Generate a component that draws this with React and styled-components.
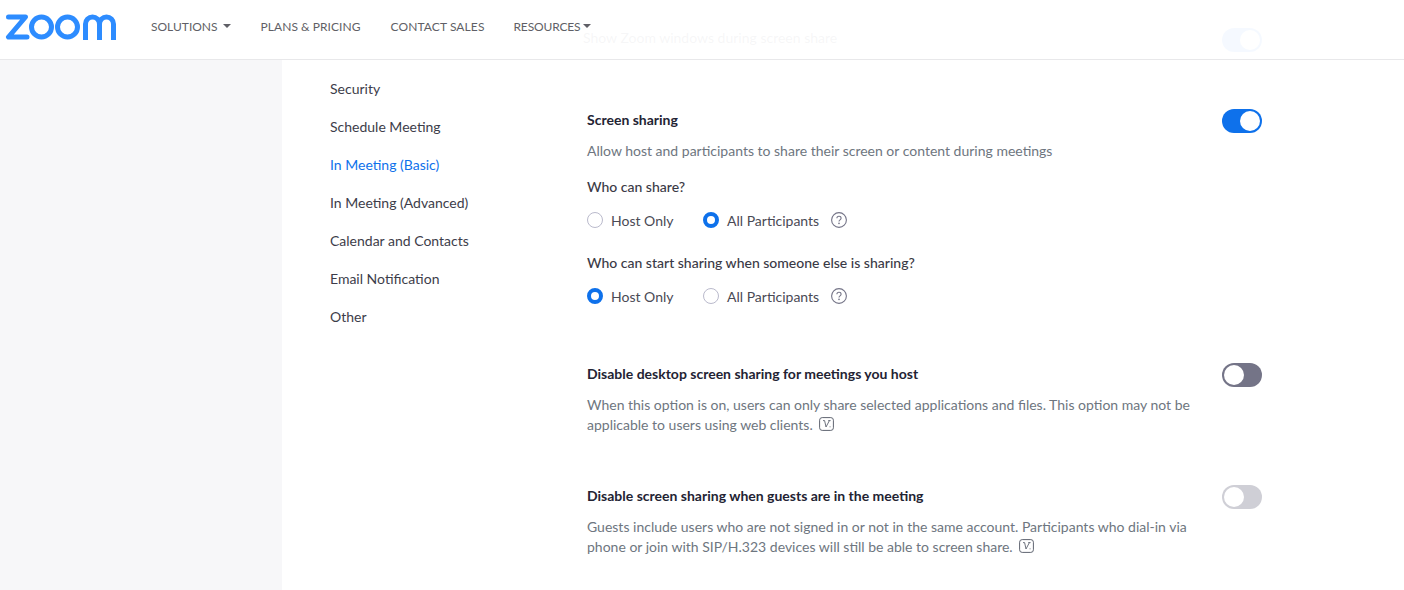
import React from 'react';
import styled, { createGlobalStyle } from 'styled-components';

const Global = createGlobalStyle`
    html, body { margin: 0; padding: 0; height: 100%; overflow: hidden; background: #fff; }
    body { font-family: Lato, "Open Sans", sans-serif; color: #232333; }
`;

const Page = styled.div`
    position: relative;
    display: flex;
    width: 1404px;
    height: 590px;
    overflow: hidden;
`;
const Header = styled.header`
    position: absolute;
    top: 0; left: 0; right: 0;
    height: 60px;
    box-sizing: border-box;
    display: flex;
    align-items: flex-start;
    background: rgba(255, 255, 255, 0.96);
    border-bottom: 1px solid #e8e8ea;
    z-index: 2;
`;
const Logo = styled.svg`
    display: block;
    flex: none;
    width: 112px;
    height: 26px;
    margin: 14px 0 0 5px;
`;
const Nav = styled.nav`
    display: flex;
    margin: 18px 0 0 34px;
    gap: 30px;
`;
const NavItem = styled.a`
    display: flex;
    align-items: center;
    height: 16px;
    margin-left: ${p => p.$shift || 0}px;
    font-size: 12px;
    font-weight: 400;
    letter-spacing: ${p => p.$track || 0}px;
    color: #5f5f66;
    white-space: nowrap;
`;
const Caret = styled.span`
    width: 0; height: 0;
    margin-left: ${p => p.$gap}px;
    border-left: 4px solid transparent;
    border-right: 4px solid transparent;
    border-top: 4px solid #5f5f66;
`;
const Sidebar = styled.aside`
    flex: 0 0 282px;
    background: #f7f7f9;
`;
const Menu = styled.ul`
    flex: 0 0 305px;
    list-style: none;
    margin: 0;
    padding: 70px 0 0 48px;
    box-sizing: border-box;
`;
const MenuItem = styled.li`
    height: 38px;
    line-height: 38px;
    font-size: 14px;
    color: ${p => (p.$active ? '#0e71eb' : '#3d3d4a')};
`;
const Settings = styled.main`
    flex: 0 0 675px;
    padding-top: 27px;
`;
const Setting = styled.section`
    position: relative;
    margin-bottom: ${p => p.$after || 0}px;
    padding-right: 60px;
`;
const Title = styled.h3`
    margin: 0;
    font-size: 14px;
    line-height: 20px;
    font-weight: 700;
    color: #232333;
`;
const Ghost = styled.div`
    margin: 1px 0 0 -4px;
    font-size: 14px;
    line-height: 20px;
    color: #232333;
`;
const Desc = styled.p`
    margin: 11px 0 0;
    font-size: 14px;
    line-height: 20px;
    color: #6e7680;
`;
const Question = styled.div`
    margin-top: ${p => p.$top}px;
    font-size: 14px;
    line-height: 20px;
    font-weight: 500;
    color: #3a3a46;
`;
const RadioRow = styled.div`
    display: flex;
    align-items: center;
    height: 20px;
    margin-top: 13px;
`;
const RadioLabel = styled.label`
    display: flex;
    align-items: center;
    width: ${p => p.$w}px;
    font-size: 14px;
    color: #4a4a55;
    white-space: nowrap;
`;
const RadioMark = styled.span`
    flex: none;
    width: 16px;
    height: 16px;
    box-sizing: border-box;
    margin-right: 8px;
    border-radius: 50%;
    background: #fff;
    border: ${p => (p.$on ? '4px solid #0e71eb' : '1px solid #babacc')};
`;
const Help = styled.svg`
    display: block;
    flex: none;
    width: 16px;
    height: 16px;
    margin-left: 12px;
`;
const Toggle = styled.span`
    position: absolute;
    top: ${p => p.$top}px;
    right: 0;
    width: 40px;
    height: 24px;
    box-sizing: border-box;
    border-radius: 12px;
    background: ${p => p.$color};
    &::after {
        content: '';
        position: absolute;
        top: 2px;
        left: ${p => (p.$on ? '18px' : '2px')};
        width: 20px;
        height: 20px;
        border-radius: 50%;
        background: #fff;
    }
`;
const Badge = styled.svg`
    display: inline-block;
    width: 15px;
    height: 14px;
    margin-left: 6px;
    vertical-align: -1px;
`;

const HelpIcon = () => (
    <Help viewBox="0 0 16 16">
        <circle cx="8" cy="8" r="7.4" fill="none" stroke="#747487" strokeWidth="1.1" />
        <path d="M5.9 6.3c0-1.2 1-2 2.1-2s2.1.8 2.1 1.9c0 1.7-2.1 1.6-2.1 3.3" fill="none" stroke="#747487" strokeWidth="1.1" />
        <circle cx="8" cy="11.4" r=".8" fill="#747487" />
    </Help>
);

const VersionIcon = () => (
    <Badge viewBox="0 0 15 14">
        <rect x=".6" y=".6" width="13.8" height="12.8" rx="2.6" fill="none" stroke="#5f6470" strokeWidth="1" />
        <path d="M4 3.6h1.6l1.4 6.4L10.4 3.6M9.2 3.6h2.4M10.6 9.8h.9" fill="none" stroke="#5f6470" strokeWidth=".9" />
    </Badge>
);

const Radio = ({ on, w, children }) => (
    <RadioLabel $w={w}>
        <RadioMark $on={on} />
        {children}
    </RadioLabel>
);

export default function App() {
    return (
        <Page>
            <Global />
            <Header>
                <Logo viewBox="0 0 112 26">
                    <g fill="none" stroke="#2d8cff" strokeWidth="5">
                        <path d="M3.5 3h17L3.5 23H22" strokeLinejoin="round" strokeLinecap="round" />
                        <circle cx="36.5" cy="13" r="10" />
                        <circle cx="62.5" cy="13" r="10" />
                        <path d="M80.5 26V10a7 7 0 0 1 14 0V26M94.5 10a7 7 0 0 1 14 0V26" />
                    </g>
                </Logo>
                <Nav>
                    <NavItem>SOLUTIONS<Caret $gap={5} /></NavItem>
                    <NavItem $track={0.05}>PLANS &amp; PRICING</NavItem>
                    <NavItem $track={0.1}>CONTACT SALES</NavItem>
                    <NavItem $track={-0.15} $shift={-1}>RESOURCES<Caret $gap={3} /></NavItem>
                </Nav>
            </Header>
            <Sidebar />
            <Menu>
                <MenuItem>Security</MenuItem>
                <MenuItem>Schedule Meeting</MenuItem>
                <MenuItem $active>In Meeting (Basic)</MenuItem>
                <MenuItem>In Meeting (Advanced)</MenuItem>
                <MenuItem>Calendar and Contacts</MenuItem>
                <MenuItem>Email Notification</MenuItem>
                <MenuItem>Other</MenuItem>
            </Menu>
            <Settings>
                <Setting $after={62}>
                    <Ghost>Show Zoom windows during screen share</Ghost>
                    <Toggle $on $color="#0e71eb" $top={0} />
                </Setting>
                <Setting $after={58}>
                    <Title>Screen sharing</Title>
                    <Toggle $on $color="#0e71eb" $top={-1} />
                    <Desc>Allow host and participants to share their screen or content during meetings</Desc>
                    <Question $top={16}>Who can share?</Question>
                    <RadioRow>
                        <Radio w={116}>Host Only</Radio>
                        <Radio on>All Participants</Radio>
                        <HelpIcon />
                    </RadioRow>
                    <Question $top={23}>Who can start sharing when someone else is sharing?</Question>
                    <RadioRow>
                        <Radio on w={116}>Host Only</Radio>
                        <Radio>All Participants</Radio>
                        <HelpIcon />
                    </RadioRow>
                </Setting>
                <Setting $after={51}>
                    <Title>Disable desktop screen sharing for meetings you host</Title>
                    <Toggle $color="#747487" $top={-1} />
                    <Desc>When this option is on, users can only share selected applications and files. This option may not be applicable to users using web clients.<VersionIcon /></Desc>
                </Setting>
                <Setting>
                    <Title>Disable screen sharing when guests are in the meeting</Title>
                    <Toggle $color="#cfcfd6" $top={-1} />
                    <Desc>Guests include users who are not signed in or not in the same account. Participants who dial-in via phone or join with SIP/H.323 devices will still be able to screen share.<VersionIcon /></Desc>
                </Setting>
            </Settings>
        </Page>
    );
}
